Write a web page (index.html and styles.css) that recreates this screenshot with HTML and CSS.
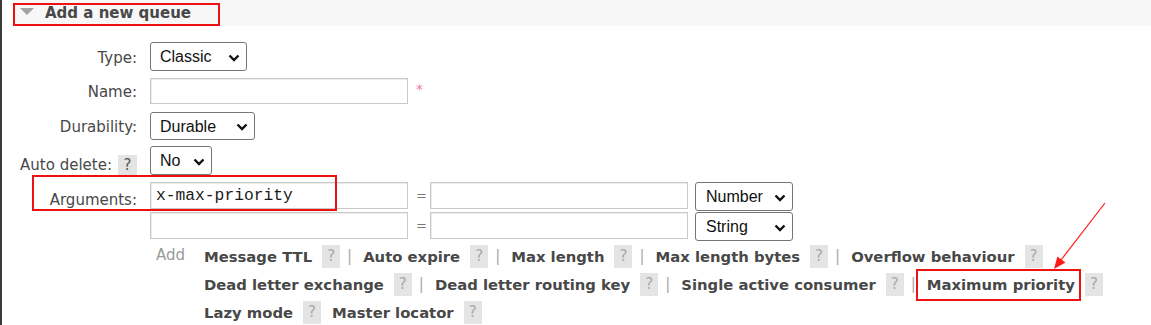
FILE: index.html
```html
<!DOCTYPE html>
<html lang="en">
<head>
<meta charset="utf-8">
<title>Add a new queue</title>
<link rel="stylesheet" href="styles.css">
</head>
<body>
<div class="page">
  <div class="section">
    <h2 class="section-title"><span class="tri"></span>Add a new queue</h2>
    <form class="form">
      <div class="row r-type">
        <label class="lbl">Type:</label>
        <div class="ctl">
          <span class="sel w-type"><select><option>Classic</option><option>Quorum</option><option>Stream</option></select><svg class="chev" width="12" height="8" viewBox="0 0 12 8"><path d="M1.5 1.5 L6 6 L10.5 1.5" fill="none" stroke="#111" stroke-width="2.4"/></svg></span>
        </div>
      </div>
      <div class="row r-name">
        <label class="lbl">Name:</label>
        <div class="ctl ctl-name">
          <input class="txt w-name" type="text">
          <span class="mand">*</span>
        </div>
      </div>
      <div class="row r-dur">
        <label class="lbl">Durability:</label>
        <div class="ctl">
          <span class="sel w-dur"><select><option>Durable</option><option>Transient</option></select><svg class="chev" width="12" height="8" viewBox="0 0 12 8"><path d="M1.5 1.5 L6 6 L10.5 1.5" fill="none" stroke="#111" stroke-width="2.4"/></svg></span>
        </div>
      </div>
      <div class="row r-auto">
        <label class="lbl lbl-auto"><span class="lbl-text">Auto delete:</span> <span class="help-lbl">?</span></label>
        <div class="ctl">
          <span class="sel w-no"><select><option>No</option><option>Yes</option></select><svg class="chev" width="12" height="8" viewBox="0 0 12 8"><path d="M1.5 1.5 L6 6 L10.5 1.5" fill="none" stroke="#111" stroke-width="2.4"/></svg></span>
        </div>
      </div>
      <div class="row r-args">
        <label class="lbl lbl-args">Arguments:</label>
        <div class="ctl args">
          <div class="arg-row">
            <input class="txt mono w-name" type="text" value="x-max-priority">
            <span class="eq">=</span>
            <input class="txt w-name" type="text">
            <span class="sel w-type2"><select><option>Number</option><option>String</option><option>Boolean</option><option>List</option></select><svg class="chev" width="12" height="8" viewBox="0 0 12 8"><path d="M1.5 1.5 L6 6 L10.5 1.5" fill="none" stroke="#111" stroke-width="2.4"/></svg></span>
          </div>
          <div class="arg-row">
            <input class="txt mono w-name" type="text">
            <span class="eq">=</span>
            <input class="txt w-name" type="text">
            <span class="sel w-type2"><select><option>String</option><option>Number</option><option>Boolean</option><option>List</option></select><svg class="chev" width="12" height="8" viewBox="0 0 12 8"><path d="M1.5 1.5 L6 6 L10.5 1.5" fill="none" stroke="#111" stroke-width="2.4"/></svg></span>
          </div>
        </div>
      </div>
      <div class="row r-links">
        <span class="lbl"></span>
        <div class="ctl links">
          <span class="add">Add</span>
          <div class="arglist">
            <div class="line">
              <span class="alink">Message TTL</span><span class="help">?</span><span class="sep">|</span>
              <span class="alink">Auto expire</span><span class="help">?</span><span class="sep">|</span>
              <span class="alink">Max length</span><span class="help">?</span><span class="sep">|</span>
              <span class="alink">Max length bytes</span><span class="help">?</span><span class="sep">|</span>
              <span class="alink">Overflow behaviour</span><span class="help">?</span>
            </div>
            <div class="line">
              <span class="alink">Dead letter exchange</span><span class="help">?</span><span class="sep">|</span>
              <span class="alink">Dead letter routing key</span><span class="help">?</span><span class="sep">|</span>
              <span class="alink">Single active consumer</span><span class="help">?</span><span class="sep">|</span>
              <span class="alink">Maximum priority</span><span class="help">?</span>
            </div>
            <div class="line">
              <span class="alink">Lazy mode</span><span class="help">?</span>
              <span class="alink">Master locator</span><span class="help">?</span>
            </div>
          </div>
        </div>
      </div>
    </form>
  </div>
</div>

<div class="annot a-head"></div>
<div class="annot a-args"></div>
<div class="annot a-prio"></div>
<svg class="arrow" width="1151" height="325" viewBox="0 0 1151 325">
  <line x1="1105" y1="203" x2="1061" y2="260" stroke="#ff1a1a" stroke-width="1.2"/>
  <polygon points="1054,269 1057.4,256.4 1065.4,262.6" fill="#ff1a1a"/>
</svg>
</body>
</html>
```
FILE: styles.css
```css
html, body {
  margin: 0;
  padding: 0;
}

body {
  background: #ffffff;
  font-family: "DejaVu Sans", Verdana, sans-serif;
  font-size: 15px;
  color: #484848;
  width: 1151px;
  height: 325px;
  overflow: hidden;
}

.page {
  border-left: 2px solid #3b3b3b;
  height: 325px;
  box-sizing: border-box;
}

.section-title {
  margin: 0 0 0 11px;
  height: 26px;
  background: #f7f7f7;
  display: flex;
  align-items: center;
  font-size: 15px;
  font-weight: bold;
  color: #484848;
  line-height: 1;
}

.tri {
  width: 0;
  height: 0;
  border-left: 7px solid transparent;
  border-right: 7px solid transparent;
  border-top: 7px solid #a3a3a3;
  margin: -3px 11px 0 7px;
}

.form {
  display: flex;
  flex-direction: column;
  margin-top: 16px;
}

.row {
  display: grid;
  grid-template-columns: 135px auto;
  column-gap: 13px;
  align-items: center;
}

.lbl {
  display: flex;
  justify-content: flex-end;
  align-items: center;
  gap: 6px;
  padding-top: 2px;
  white-space: nowrap;
}

.lbl-args {
  align-self: start;
  padding-top: 9px;
}

.ctl {
  display: flex;
  align-items: center;
}

.r-name { margin-top: 7px; }
.r-dur { margin-top: 8px; }
.r-auto { margin-top: 6px; align-items: start; }
.r-args { margin-top: 7px; align-items: start; }
.r-links { margin-top: 1px; align-items: start; }

/* selects */
.sel {
  position: relative;
  display: inline-block;
}

.sel select {
  appearance: none;
  -webkit-appearance: none;
  display: block;
  box-sizing: border-box;
  border: 1px solid #767676;
  border-radius: 3px;
  background: #ffffff;
  font-family: "Liberation Sans", Arial, sans-serif;
  font-size: 16px;
  color: #111;
  padding: 0 0 0 9px;
  margin: 0;
  outline: none;
}

.chev {
  position: absolute;
  right: 7px;
  top: 50%;
  margin-top: -3px;
  pointer-events: none;
}

.w-type select { width: 97px; height: 29px; }
.w-dur select { width: 105px; height: 28px; }
.w-no select { width: 62px; height: 29px; }
.w-type2 select { width: 98px; height: 29px; padding-left: 10px; }

.w-type2 { margin-left: 7px; }

/* text inputs */
.txt {
  box-sizing: border-box;
  height: 27px;
  border: 1px solid #c9c9c9;
  box-shadow: inset 1px 1px 0 #ececec;
  background: #ffffff;
  margin: 0;
  padding: 0 0 0 5px;
  outline: none;
  font-family: "Liberation Sans", Arial, sans-serif;
  font-size: 16px;
  color: #222;
}

.w-name { width: 258px; }

.mono {
  font-family: "Liberation Mono", "Courier New", monospace;
  font-size: 16.3px;
  color: #1a1a1a;
}

.ctl-name .txt { height: 26px; }

.mand {
  color: #f27b94;
  font-size: 14px;
  margin-left: 8px;
  margin-top: -4px;
}

.lbl-auto {
  align-items: flex-start;
  padding-top: 9px;
  height: 29px;
  box-sizing: border-box;
}

.lbl-text {
  line-height: 17px;
  padding-top: 2px;
}

.help-lbl {
  display: inline-flex;
  justify-content: center;
  align-items: center;
  width: 19px;
  height: 20px;
  background: #e4e4e4;
  color: #555;
}

/* arguments */
.args {
  flex-direction: column;
  align-items: flex-start;
  gap: 1px;
}

.arg-row {
  display: flex;
  align-items: flex-start;
  height: 29px;
}

.eq {
  width: 6px;
  margin: 0 8px 0 8px;
  color: #777;
  line-height: 27px;
  font-size: 13px;
}

/* argument links */
.links {
  align-items: flex-start;
}

.add {
  width: 48px;
  padding-left: 6px;
  padding-top: 3px;
  color: #9a9a9a;
  line-height: 20px;
}

.arglist {
  display: flex;
  flex-direction: column;
}

.line {
  display: flex;
  align-items: center;
  height: 28px;
  white-space: nowrap;
}

.alink {
  font-weight: bold;
  font-size: 14.8px;
  color: #484848;
}

.help {
  display: inline-flex;
  justify-content: center;
  align-items: center;
  width: 18px;
  height: 23px;
  background: #e4e4e4;
  color: #a8a8a8;
  margin-left: 10px;
}

.help + .alink {
  margin-left: 11px;
}

.sep {
  color: #a9a9a9;
  margin: 0 11px 0 7px;
}

/* annotations overlay */
.annot {
  position: absolute;
  box-sizing: border-box;
  border: 2px solid #ee1111;
  pointer-events: none;
}

.a-head { left: 13px; top: 3px; width: 207px; height: 23px; }
.a-args { left: 32px; top: 175px; width: 305px; height: 36px; }
.a-prio { left: 916px; top: 269px; width: 165px; height: 32px; }

.arrow {
  position: absolute;
  left: 0;
  top: 0;
  pointer-events: none;
}
```
